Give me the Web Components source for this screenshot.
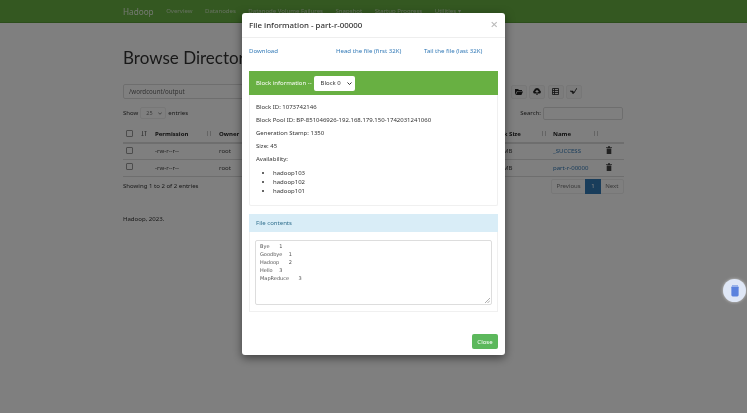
<!DOCTYPE html>
<html lang="en"><head><meta charset="utf-8"><title>Browse Directory</title>
<style>
html,body{margin:0;padding:0;height:100%;overflow:hidden;background:#fff;font-family:"Noto Sans","Open Sans",sans-serif;}
</style></head><body>
<hadoop-app></hadoop-app>
<script>
function def(name,css,html){
  customElements.define(name,class extends HTMLElement{
    constructor(){super();const r=this.attachShadow({mode:'open'});
      const t=document.createElement('template');t.innerHTML='<style>'+css+'</style>'+html;r.appendChild(t.content.cloneNode(true));}
  });
}
const sortIcon='<svg width="6" height="7" viewBox="0 0 6 7"><path d="M1.5 1v5M.5 5l1 1 1-1M4.500 6V1M3.500 2l1-1 1 1" fill="none" stroke="#777" stroke-width=".8"/></svg>';
const faint='<svg width="6" height="7" viewBox="0 0 6 7"><path d="M1.5 1v5M4.500 1v5" fill="none" stroke="#c8c8c8" stroke-width="1"/></svg>';
const box='<span style="display:inline-block;width:5px;height:5px;border:1px solid #999;border-radius:1px;background:#fff"></span>';
const trash='<svg width="6" height="8" viewBox="0 0 6 8" style="margin-left:-4px"><path d="M0 1.200h6v.8H0zM2 .3h2v1H2zM.7 2.400h4.600V8H.7z" fill="#444"/></svg>';

def('app-navbar',`
:host{display:flex;align-items:center;height:22px;background:#68b042;border-bottom:1px solid #5a9c38;padding-left:123px;font-size:6.050px;color:#c9e0bb;gap:12.500px}
.b{font-size:8.200px;color:#e6f1df}
`,`<span class="b">Hadoop</span><span>Overview</span><span>Datanodes</span><span>Datanode Volume Failures</span><span>Snapshot</span><span>Startup Progress</span><span>Utilities ▾</span>`);

def('tool-bar',`
:host{display:flex;align-items:center;height:15px;gap:2.300px;margin-top:14px}
.path{width:382px;height:15px;border:1px solid #ddd;border-radius:2px;font-size:6.200px;color:#666;padding-left:5px;display:flex;align-items:center;box-sizing:border-box;flex:none;margin-right:3.700px}
.i{width:16px;height:14px;background:#f8f8f8;border:1px solid #eee;border-radius:2px;display:flex;align-items:center;justify-content:center;box-sizing:border-box}
`,`<div class="path">/wordcount/output</div>
<div class="i"><svg width="8" height="6" viewBox="0 0 8 6"><path d="M0 0h3l1 1h3v1H2L0 6zM2.400 2.600H8L6.400 6H.9z" fill="#222"/></svg></div>
<div class="i"><svg width="8" height="7" viewBox="0 0 8 7"><path d="M4 0a3 3 0 0 1 3 2.500A1.600 1.600 0 0 1 6.500 5.500H5V4h1L4 1.800 2 4h1v1.500H1.500A1.600 1.600 0 0 1 1 2.500 3 3 0 0 1 4 0zM3.400 4h1.200v3H3.400z" fill="#222"/></svg></div>
<div class="i"><svg width="7" height="7" viewBox="0 0 7 7"><path d="M.5.5h6v6h-6zM.5 2.500h6M.5 4.500h6M2.500.5v6" fill="none" stroke="#222" stroke-width=".8"/></svg></div>
<div class="i"><svg width="7" height="7" viewBox="0 0 7 7"><path d="M0 3l2 1 1 2 4-6-3 5-1-2z" fill="#222" stroke="#222" stroke-width=".5"/></svg></div>`);

def('table-controls',`
:host{display:flex;align-items:center;justify-content:space-between;height:14px;margin-top:7px;font-size:6.050px;color:#333}
.l,.r{display:flex;align-items:center;gap:2px}
.sel{width:26px;height:12px;border:1px solid #eee;border-radius:2px;font-size:5.500px;color:#777;display:flex;align-items:center;justify-content:space-between;padding:0 3px 0 5px;box-sizing:border-box}
.s{width:80px;height:13px;border:1px solid #ddd;border-radius:2px;box-sizing:border-box;margin-right:1px}
`,`<div class="l">Show <span class="sel">25 <svg width="4" height="3" viewBox="0 0 4 3"><path d="M.3.5L2 2.300 3.700.5" fill="none" stroke="#555" stroke-width=".7"/></svg></span> entries</div><div class="r">Search: <span class="s"></span></div>`);

def('file-table',`
:host{display:block;margin-top:6px;font-size:6.050px;color:#444}
.row{display:grid;grid-template-columns:15px 14px 64px 60px 1fr 62px 57px 14px;align-items:center;height:16.500px;box-sizing:border-box;border-bottom:1px solid #ddd;padding-left:3px}
.row.h{height:17.500px;font-weight:700;border-bottom:2px solid #ddd;color:#222}
.h span{display:flex;align-items:center;justify-content:space-between}
.h .a{padding-right:7px}.h .b{padding-right:6px}.h .c{padding-right:11px}
.tail{justify-self:end;padding-right:12px}
a{color:#337ab7}
`,`<div class="row h"><span>${box}</span><span>${sortIcon}</span><span class="a">Permission ${faint}</span><span>Owner</span><span></span><span class="b">Block Size ${faint}</span><span class="c">Name ${faint}</span><span></span></div>
<div class="row"><span>${box}</span><span></span><span>-rw-r--r--</span><span>root</span><span></span><span>128 MB</span><a>_SUCCESS</a><span>${trash}</span></div>
<div class="row"><span>${box}</span><span></span><span>-rw-r--r--</span><span>root</span><span></span><span>128 MB</span><a>part-r-00000</a><span>${trash}</span></div>`);

def('table-footer',`
:host{display:flex;justify-content:space-between;align-items:center;height:15px;margin-top:2px;font-size:6.050px;color:#333}
.p{display:flex;align-items:center;height:15px;border:1px solid #eee;border-radius:2px;box-sizing:border-box}
.p span{padding:0 4.500px;line-height:13px;color:#777}
.p .on{background:#337ab7;color:#fff;padding:0 6px;line-height:15px}
`,`<div>Showing 1 to 2 of 2 entries</div><div class="p"><span>Previous</span><span class="on">1</span><span>Next</span></div>`);

def('browse-page',`
:host{display:block;width:501px;margin-left:123px;padding-top:23px}
h1{margin:0;font-size:17px;line-height:24px;font-weight:400;color:#333;font-family:Lato,"Noto Sans",sans-serif;white-space:nowrap}
.foot{margin-top:21px;font-size:6.050px;line-height:9px;color:#333}
`,`<h1>Browse Directory</h1><tool-bar></tool-bar><table-controls></table-controls><file-table></file-table><table-footer></table-footer><div class="foot">Hadoop, 2023.</div>`);

def('block-panel',`
:host{display:block;margin-top:9px;border:1px solid #f0f0f0;border-top:0;border-radius:2px;height:135px;box-sizing:border-box;color:#333;font-size:6px}
.head{height:24px;background:#68b042;color:#fff;display:flex;align-items:center;gap:2px;padding-left:7px;margin:0 -1px}
.sel{width:41px;height:15px;background:#fff;border-radius:2px;color:#333;display:flex;align-items:center;justify-content:space-between;padding:0 3px 0 7px;box-sizing:border-box}
.body{padding:6px 6px 0}
p{margin:0;height:13px;line-height:13px}
ul{margin:3px 0 0;padding-left:17px}
li{height:9px;line-height:9px}
`,`<div class="head">Block information -- <span class="sel">Block 0 <svg width="5" height="3" viewBox="0 0 5 3"><path d="M.5.5l2 2 2-2" fill="none" stroke="#333"/></svg></span></div>
<div class="body"><p>Block ID: 1073742146</p><p>Block Pool ID: BP-851046926-192.168.179.150-1742031241060</p><p>Generation Stamp: 1350</p><p>Size: 45</p><p>Availability:</p>
<ul><li>hadoop103</li><li>hadoop102</li><li>hadoop101</li></ul></div>`);

def('contents-panel',`
:host{display:block;margin-top:8px;border:1px solid #f0f0f0;border-top:0;height:98px;box-sizing:border-box}
.head{height:18px;background:#d9edf7;color:#31708f;font-size:6.050px;display:flex;align-items:center;padding-left:7px;margin:0 -1px}
.ta{position:relative;margin:8px 5px 0;height:65px;border:1px solid #ddd;border-radius:2px;box-sizing:border-box;padding:1px 4px;font-size:5px;line-height:8px;color:#555;white-space:pre;tab-size:9.600px;font-family:"DejaVu Sans",sans-serif}
svg{position:absolute;right:1px;bottom:1px}
`,`<div class="head">File contents</div><div class="ta">Bye	1
Goodbye	1
Hadoop	2
Hello	3
MapReduce	3<svg width="5" height="5" viewBox="0 0 5 5"><path d="M0 5L5 0M2.500 5L5 2.500" stroke="#777" stroke-width=".6"/></svg></div>`);

def('file-modal',`
:host{position:absolute;left:242px;top:13px;width:263px;height:342px;background:#fff;border-radius:3px;box-shadow:0 3px 10px rgba(0,0,0,.5);box-sizing:border-box;display:block;color:#333}
.hd{height:24px;border-bottom:1px solid #eee;display:flex;align-items:center;justify-content:space-between;padding:0 7px 0 7px;font-size:7.900px;font-weight:500}
.x{color:#bbb;font-size:13px;line-height:11px;margin-top:-2px}
.bd{padding:0 7px}
.links{display:grid;grid-template-columns:87px 88px 1fr;height:24px;align-items:center;font-size:6.100px;color:#337ab7}
.ft{display:flex;justify-content:flex-end;padding:0 7px;margin-top:22px}
.btn{width:26px;height:15px;background:#5cb85c;color:#fff;border-radius:2px;font-size:6.050px;display:flex;align-items:center;justify-content:center}
`,`<div class="hd"><span>File information - part-r-00000</span><span class="x">×</span></div>
<div class="bd"><div class="links"><span>Download</span><span>Head the file (first 32K)</span><span>Tail the file (last 32K)</span></div>
<block-panel></block-panel><contents-panel></contents-panel></div>
<div class="ft"><span class="btn">Close</span></div>`);

def('float-badge',`
:host{position:absolute;left:723px;top:279px;width:23px;height:23px;border-radius:50%;background:#dfe7f6;box-shadow:0 0 3px rgba(255,255,255,.6);display:flex;align-items:center;justify-content:center}
`,`<svg width="10" height="13" viewBox="0 0 11 14"><path d="M1.500 3.500L3 1h5l1.500 2.500V12a1.500 1.500 0 0 1-1.500 1.500H3A1.500 1.500 0 0 1 1.500 12z" fill="#5b82de"/><path d="M3 1h5l1 2.200H2z" fill="#9ab3ea"/></svg>`);

def('hadoop-app',`
:host{display:block;position:relative;width:747px;height:413px;overflow:hidden;filter:blur(.4px)}
.backdrop{position:absolute;inset:0;background:rgba(0,0,0,.5)}
`,`<app-navbar></app-navbar><browse-page></browse-page><div class="backdrop"></div><file-modal></file-modal><float-badge></float-badge>`);
</script>
</body></html>
